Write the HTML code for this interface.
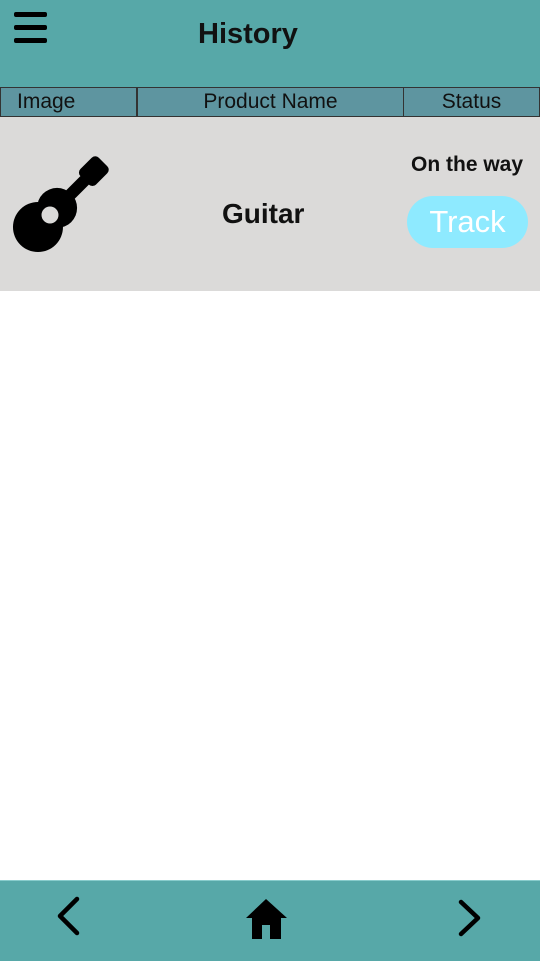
<!DOCTYPE html>
<html><head><style>
body{margin:0;width:540px;height:960px;position:relative;background:#fff;font-family:"Liberation Sans","DejaVu Sans",sans-serif;overflow:hidden}
.top{position:absolute;left:0;top:0;width:540px;height:87px;background:#57a8a8}
.th{position:absolute;top:87px;height:28px;background:#5e95a0;border:1px solid #333;font-size:21px;line-height:27px;color:#111}
.row{position:absolute;left:0;top:117px;width:540px;height:174px;background:#dbdad9}
.bot{position:absolute;left:0;top:880px;width:540px;height:80px;background:#57a8a8;border-top:1px solid #8cc}
</style></head><body>
<div class="top">
<div style="position:absolute;left:14px;top:12px;width:33px;height:5px;background:#000;border-radius:2px"></div>
<div style="position:absolute;left:14px;top:25px;width:33px;height:5px;background:#000;border-radius:2px"></div>
<div style="position:absolute;left:14px;top:38px;width:33px;height:5px;background:#000;border-radius:2px"></div>
<div style="position:absolute;left:198px;top:18px;font-size:29px;font-weight:bold;color:#111">History</div>
</div>
<div class="th" style="left:0;width:135px"><span style="margin-left:16px">Image</span></div>
<div class="th" style="left:137px;width:265px;text-align:center">Product Name</div>
<div class="th" style="left:403px;width:135px;text-align:center">Status</div>
<div class="row">
<svg style="position:absolute;left:0;top:0" width="140" height="174" viewBox="0 117 140 174">
<g transform="translate(50,215) rotate(45) translate(0,-5)">
<g fill="#000">
<rect x="-11" y="-70" width="22" height="26" rx="5"/>
<rect x="-6" y="-50" width="12" height="40" />
<circle cx="0" cy="-5" r="20"/>
<circle cx="0" cy="22" r="25"/>
<rect x="-17" y="-5" width="34" height="27"/>
</g>
<circle cx="0" cy="5" r="8.5" fill="#dbdad9"/>
</g>
</svg>
<div style="position:absolute;left:222px;top:81px;font-size:28px;font-weight:bold;color:#111">Guitar</div>
<div style="position:absolute;left:411px;top:36px;font-size:21px;font-weight:bold;color:#111">On the way</div>
<div style="position:absolute;left:407px;top:79px;width:121px;height:52px;border-radius:26px;background:#8eeaff;color:#fff;font-size:31px;text-align:center;line-height:52px">Track</div>
</div>
<div class="bot">
<svg width="540" height="80" viewBox="0 0 540 80">
<path d="M77 18 L60 35 L77 52" stroke="#000" stroke-width="4.5" fill="none" stroke-linecap="round" stroke-linejoin="round"/>
<path d="M461 21 L478 37 L461 53" stroke="#000" stroke-width="4.5" fill="none" stroke-linecap="round" stroke-linejoin="round"/>
<path d="M266 18 L246 37 L252 37 L252 58 L262 58 L262 44 L270 44 L270 58 L281 58 L281 37 L287 37Z" fill="#000"/>
</svg>
</div>
</body></html>
